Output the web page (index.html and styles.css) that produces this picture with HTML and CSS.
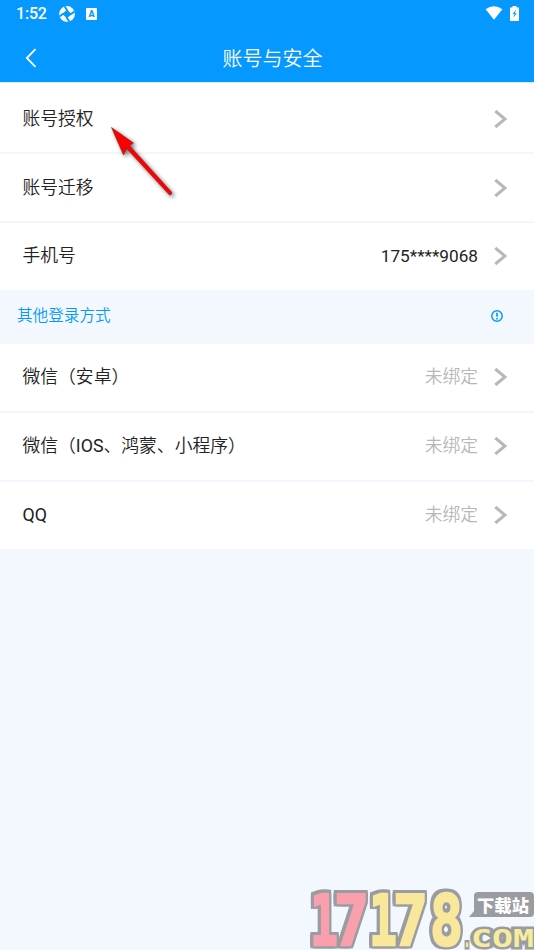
FILE: index.html
```html
<!DOCTYPE html>
<html lang="zh-CN">
<head>
<meta charset="utf-8">
<title>账号与安全</title>
<link rel="stylesheet" href="styles.css">
</head>
<body>
<svg class="defs" width="0" height="0"><symbol id="chev" viewBox="0 0 14 20"><path d="M2.3 2 L12 10 L2.3 18" fill="none" stroke="#b8b8b8" stroke-width="3"/></symbol></svg>
<header class="top">
  <div class="status">
    <span class="time">1:52</span>
    <svg class="aperture" width="16" height="16" viewBox="0 0 16 16"><circle cx="8" cy="8" r="7.9" fill="#fff"/><path d="M8 3.4 L12.6 8 L8 12.6 L3.4 8Z M4.6 .6 L6.6 .1 L9.4 4.4 L7.4 4.8Z M15.4 4.6 L15.9 6.6 L11.6 9.4 L11.2 7.4Z M11.4 15.4 L9.4 15.9 L6.6 11.6 L8.6 11.2Z M.6 11.4 L.1 9.4 L4.4 6.6 L4.8 8.6Z" fill="#0598ff"/></svg>
    <span class="abox">A</span>
    <span class="grow"></span>
    <svg class="wifi" width="18" height="14" viewBox="0 0 18 14"><path d="M.6 3.2 Q9 -2.6 17.4 3.2 L9 13.7Z" fill="#fff"/></svg>
    <svg class="battery" width="9" height="15" viewBox="0 0 9 15"><path d="M2.5 0h4v1.5H9V15H0V1.5h2.5z" fill="#fff"/><path d="M6 3.5 2.7 8h1.8L3.2 12 6.7 7.2H4.8z" fill="#0598ff"/></svg>
  </div>
  <nav class="nav">
    <svg class="back" width="12" height="20" viewBox="0 0 12 20"><path d="M10.5 1.2 L1.8 10 L10.5 18.8" fill="none" stroke="#fff" stroke-width="1.8"/></svg>
    <h1>账号与安全</h1>
  </nav>
</header>
<main>
  <div class="row first"><span>账号授权</span><svg class="chev"><use href="#chev"/></svg></div>
  <div class="row"><span>账号迁移</span><svg class="chev"><use href="#chev"/></svg></div>
  <div class="row up"><span>手机号</span><span class="phone">175****9068</span><svg class="chev"><use href="#chev"/></svg></div>
  <div class="section"><span>其他登录方式</span><svg width="12" height="12" viewBox="0 0 12 12"><circle cx="6" cy="6" r="5.2" fill="none" stroke="#0598ff" stroke-width="1.5"/><path d="M6 2.8v4M6 7.9v1.5" stroke="#0598ff" stroke-width="1.7"/></svg></div>
  <div class="row up flush"><span>微信（安卓）</span><span class="unbound">未绑定</span><svg class="chev"><use href="#chev"/></svg></div>
  <div class="row up"><span>微信（<b>IOS</b>、鸿蒙、小程序）</span><span class="unbound">未绑定</span><svg class="chev"><use href="#chev"/></svg></div>
  <div class="row up"><span><b>QQ</b></span><span class="unbound">未绑定</span><svg class="chev"><use href="#chev"/></svg></div>
</main>
<svg class="arrow" width="84" height="90" viewBox="0 0 84 90"><path d="M6.5 2.5 L28.5 18 L24.5 20.5 L66.5 67 Q67.5 69.5 64.5 70 L21.7 23.5 L18.5 30Z" fill="#fb0000" stroke="#8b2020" stroke-width=".6"/></svg>
<svg class="mark" width="234" height="70" viewBox="300 880 234 70">
  <g class="digits">
    <text class="pink" x="310" y="944.5" textLength="28" lengthAdjust="spacingAndGlyphs">1</text>
    <text class="pink" x="334" y="944.5" textLength="35" lengthAdjust="spacingAndGlyphs">7</text>
    <text x="369" y="944.5" textLength="28" lengthAdjust="spacingAndGlyphs">1</text>
    <text x="393" y="944.5" textLength="35" lengthAdjust="spacingAndGlyphs">7</text>
    <text x="430" y="944.5" textLength="33" lengthAdjust="spacingAndGlyphs">8</text>
  </g>
  <path d="M478 892h52q4 0 4 4v17q0 4-4 4h-61l5-6v-15q0-4 4-4z" fill="#9b9ca2"/>
  <text class="site" x="477" y="911.5" textLength="52">下载站</text>
  <text class="com" x="463" y="947" textLength="8" lengthAdjust="spacingAndGlyphs">.</text>
  <text class="com" x="471" y="947" textLength="63" lengthAdjust="spacingAndGlyphs">COM</text>
</svg>
</body>
</html>
```
FILE: styles.css
```css
* { box-sizing: border-box; }
body {
  margin: 0;
  position: relative;
  width: 534px;
  height: 950px;
  overflow: hidden;
  background: #f3f8ff;
  color: #222;
  font-family: Roboto, "Noto Sans CJK SC", sans-serif;
  font-size: 17.8px;
}
.defs { position: absolute; }
.top { height: 82px; background: #0598ff; color: #fff; }
.status { display: flex; align-items: center; height: 27px; padding: 0 15px 0 16px; }
.time { width: 43px; font-size: 16px; font-weight: 500; letter-spacing: -.2px; }
.abox {
  width: 11px; height: 12px; margin-left: 11px;
  border-radius: 1px; background: #fff; color: #0598ff;
  font-size: 9px; font-weight: 900; line-height: 12px; text-align: center;
}
.grow { flex: 1; }
.wifi { margin-right: 7px; margin-top: -1px; }
.battery { margin-top: -1px; }
.nav { display: flex; align-items: center; height: 62px; padding-left: 24.5px; }
h1 { margin: 0 0 0 186px; padding-top: 2px; font-size: 20px; font-weight: 350; line-height: 30px; }
.row {
  display: flex; align-items: center; height: 69px;
  padding: 0 27px 0 22.5px;
  border-top: 2px solid #f1f7ff; background: #fff;
  font-weight: 350; line-height: 26px;
}
.row > span:first-child { flex: 1; }
.row.first { height: 70px; border-top: 1px solid #d4edff; padding-top: 2px; }
.row.up { padding-bottom: 2px; }
.row.up > span { padding-top: 1px; }
.row.flush { height: 67px; border-top: 0; }
.row b { font-weight: 400; }
.chev { width: 14px; height: 20px; margin-left: 15px; }
.row .phone { font-weight: 400; font-size: 17.2px; padding-top: 0; }
.unbound { color: #b8b8b8; }
.section {
  display: flex; align-items: center; justify-content: space-between;
  height: 54px; padding: 0 31px 3px 17px;
  color: #0598ff; font-size: 15.6px; font-weight: 350;
}
.section span { padding-bottom: 3px; }
.arrow { position: absolute; left: 105px; top: 125px; filter: drop-shadow(2px 2px 2px rgba(0,0,0,.55)); }
.mark { position: absolute; left: 300px; top: 880px; }
.digits { filter: drop-shadow(2.5px 0 0 #9b9ca2) drop-shadow(-2.5px 0 0 #9b9ca2) drop-shadow(0 2.5px 0 #9b9ca2) drop-shadow(0 -2.5px 0 #9b9ca2); }
.digits text {
  font: bold 69px "DejaVu Sans Mono", monospace;
  fill: #f9e89c; stroke: #f9e89c; stroke-width: 2.5px;
}
.digits .pink { fill: #f9a0ac; stroke: #f9a0ac; }
.site { font: 900 17.3px "Noto Sans CJK SC", sans-serif; fill: #fff; }
.com {
  font: bold 25px "DejaVu Sans Mono", monospace;
  fill: #f5ec9c; stroke: #9b9ca2; stroke-width: 5px; paint-order: stroke;
}
```
